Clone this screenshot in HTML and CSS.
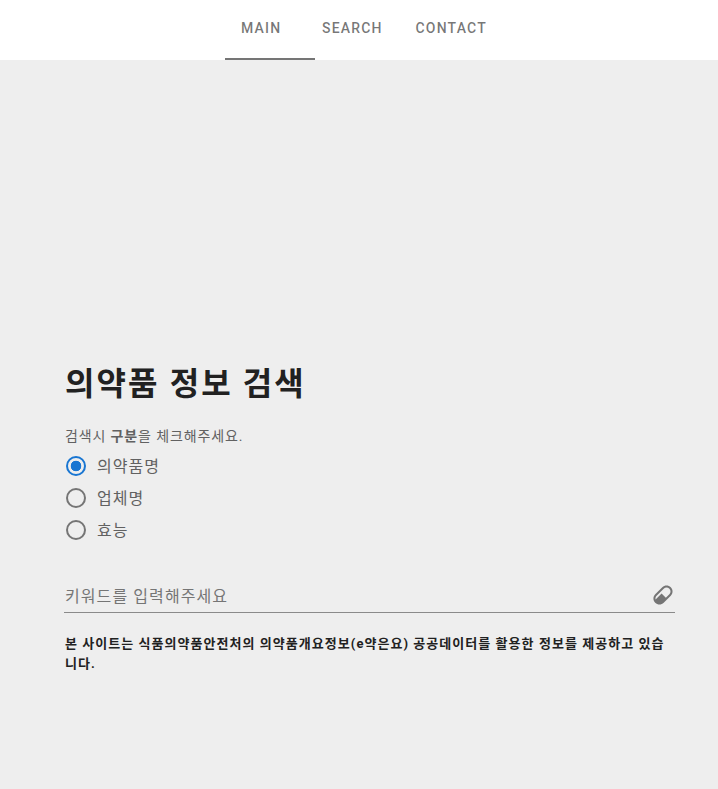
FILE: index.html
```html
<!DOCTYPE html>
<html lang="ko">
<head>
<meta charset="utf-8">
<title>의약품 정보 검색</title>
<link rel="stylesheet" href="styles.css">
</head>
<body>
<header class="topbar">
  <nav class="tabs">
    <a class="tab tab-main">MAIN</a>
    <a class="tab tab-search">SEARCH</a>
    <a class="tab tab-contact">CONTACT</a>
  </nav>
</header>
<main class="content">
  <h1 class="title">의약품 정보 검색</h1>
  <p class="hint">검색시 <b class="hint-strong">구분</b>을 체크해주세요.</p>
  <div class="radios">
    <label class="radio"><span class="dot dot-on"></span><span class="radio-text">의약품명</span></label>
    <label class="radio"><span class="dot"></span><span class="radio-text">업체명</span></label>
    <label class="radio"><span class="dot"></span><span class="radio-text">효능</span></label>
  </div>
  <div class="field">
    <span class="placeholder">키워드를 입력해주세요</span>
    <svg class="pill" viewBox="0 0 24 24" width="24" height="24" aria-hidden="true"><path d="M4.22,11.29L11.29,4.22C13.64,1.88 17.43,1.88 19.78,4.22C22.12,6.56 22.12,10.36 19.78,12.71L12.71,19.78C10.36,22.12 6.56,22.12 4.22,19.78C1.88,17.43 1.88,13.64 4.22,11.29M5.64,12.71C4.59,13.75 4.24,15.24 4.6,16.57L10.59,10.59L14.83,14.83L18.36,11.29C19.93,9.73 19.93,7.2 18.36,5.64C16.8,4.07 14.27,4.07 12.71,5.64L5.64,12.71Z"/></svg>
  </div>
  <p class="notice">본 사이트는 식품의약품안전처의 의약품개요정보(e약은요) 공공데이터를 활용한 정보를 제공하고 있습니다.</p>
</main>
</body>
</html>
```
FILE: styles.css
```css
* { box-sizing: border-box; }
html, body { margin: 0; height: 100%; }
body {
  background: #eeeeee;
  font-family: Roboto, "Noto Sans CJK KR", sans-serif;
  color: rgba(0, 0, 0, .87);
  overflow: hidden;
}
.topbar { background: #fff; height: 60px; display: flex; justify-content: center; }
.tabs { display: flex; height: 60px; margin-left: 12px; }
.tab {
  display: block;
  font-size: 14px;
  font-weight: 500;
  letter-spacing: 1.2px;
  line-height: 56px;
  color: rgba(0, 0, 0, .54);
  height: 60px;
}
.tab-main { width: 90px; padding-left: 16.5px; border-bottom: 2px solid #757575; }
.tab-search { width: 101px; padding-left: 7.5px; }
.tab-contact { width: 90px; }
.content { padding: 300px 43px 0 65px; }
.title {
  margin: 0;
  font-size: 32px;
  font-weight: 700;
  line-height: 48px;
  letter-spacing: 2.1px;
  color: #212121;
}
.hint { margin: 18px 0 0; font-size: 14px; line-height: 20px; letter-spacing: .87px; color: #616161; }
.hint-strong { font-weight: 700; }
.radios { display: flex; flex-direction: column; margin-top: 4px; }
.radio { display: flex; align-items: center; height: 32px; gap: 11px; font-size: 16px; letter-spacing: 1px; color: #616161; }
.radio-text { padding-bottom: 2px; }
.dot { width: 20px; height: 20px; border: 2px solid #757575; border-radius: 50%; margin-left: 1px; display: block; }
.dot-on { border-color: #1976d2; background: radial-gradient(circle, #1976d2 0 5px, transparent 5.6px); }
.field {
  display: flex; justify-content: space-between; align-items: center;
  margin: 32px 0 0 -1px; height: 35px; padding: 2px 0 2px 1px;
  border-bottom: 1px solid #8a8a8a;
}
.placeholder { font-size: 16px; letter-spacing: 1.09px; color: #757575; }
.pill { fill: #757575; }
.notice { margin: 21px 0 0; font-size: 13px; font-weight: 700; line-height: 20px; letter-spacing: 1.04px; color: #212121; }
```
